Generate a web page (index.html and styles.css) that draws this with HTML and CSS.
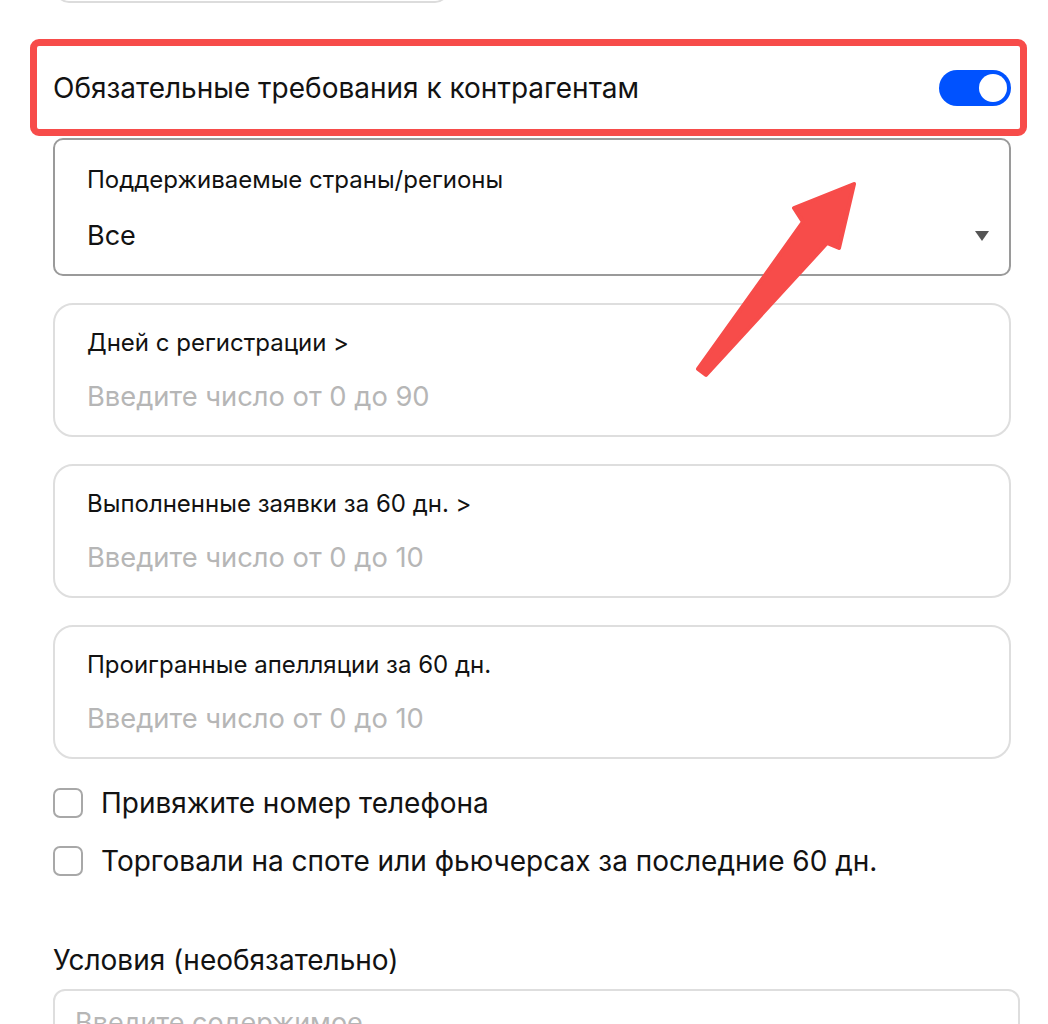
FILE: index.html
```html
<!DOCTYPE html>
<html lang="ru">
<head>
    <meta charset="UTF-8">
    <meta name="viewport" content="width=device-width, initial-scale=1.0">
    <title>Требования к контрагентам</title>
    <link rel="stylesheet" href="styles.css">
</head>
<body>
    <div class="page">
        <div class="prev-field"></div>

        <!-- Toggle row with red annotation -->
        <div class="toggle-row">
            <div class="highlight"></div>
            <span class="toggle-title">Обязательные требования к контрагентам</span>
            <div class="switch on"><div class="knob"></div></div>
        </div>

        <div class="field select-field">
            <div class="field-label">Поддерживаемые страны/регионы</div>
            <div class="field-value">
                <span>Все</span>
                <span class="caret"></span>
            </div>
        </div>

        <div class="field">
            <div class="field-label">Дней с регистрации &gt;</div>
            <div class="field-value placeholder">Введите число от 0 до 90</div>
        </div>

        <div class="field">
            <div class="field-label">Выполненные заявки за 60 дн. &gt;</div>
            <div class="field-value placeholder">Введите число от 0 до 10</div>
        </div>

        <div class="field">
            <div class="field-label">Проигранные апелляции за 60 дн.</div>
            <div class="field-value placeholder">Введите число от 0 до 10</div>
        </div>

        <div class="checks">
            <label class="check-row"><span class="checkbox"></span>Привяжите номер телефона</label>
            <label class="check-row"><span class="checkbox"></span>Торговали на споте или фьючерсах за последние 60 дн.</label>
        </div>

        <div class="section-title">Условия (необязательно)</div>
        <div class="textarea">
            <span class="placeholder">Введите содержимое</span>
        </div>

        <!-- annotation arrow -->
        <svg class="arrow" width="1048" height="1024" viewBox="0 0 1048 1024">
            <polygon points="698,369 706,375 827,243 839,248 854,184 794,208 803,222"
                     fill="#f74c4a" stroke="#f74c4a" stroke-width="4" stroke-linejoin="round"/>
        </svg>
    </div>
</body>
</html>
```

FILE: styles.css
```css
body {
    margin: 0;
    background: #ffffff;
    font-family: Inter, "Noto Sans", sans-serif;
    color: #121212;
    overflow: hidden;
    height: 1024px;
}
.page {
    position: relative;
    width: 958px;
    padding-left: 53px;
    display: flex;
    flex-direction: column;
}
.page > * {
    flex-shrink: 0;
}
.prev-field {
    width: 394px;
    height: 40px;
    margin-top: -37px;
    margin-left: 2px;
    border: 2px solid #dcdcdc;
    border-radius: 0 0 14px 14px;
    box-sizing: border-box;
}

/* toggle row */
.toggle-row {
    position: relative;
    height: 96px;
    margin-top: 37px;
    display: flex;
    align-items: center;
    justify-content: space-between;
}
.highlight {
    position: absolute;
    left: -23px;
    right: -16px;
    top: -1px;
    bottom: 0;
    border: 7px solid #f74c4a;
    border-radius: 9px;
}
.toggle-title {
    font-size: 28px;
}
.switch {
    width: 72px;
    height: 36px;
    border-radius: 18px;
    background: #0052ff;
    position: relative;
}
.switch .knob {
    position: absolute;
    top: 4px;
    right: 4px;
    width: 28px;
    height: 28px;
    border-radius: 50%;
    background: #fff;
}

/* fields */
.field {
    border: 2px solid #dedede;
    border-radius: 20px;
    padding: 23px 32px 0;
    margin-top: 27px;
    height: 134px;
    box-sizing: border-box;
}
.select-field {
    margin-top: 2px;
    height: 138px;
    border-color: #9a9a9a;
    border-radius: 10px;
    padding-top: 25px;
}
.field-label {
    font-size: 24px;
    line-height: 30px;
}
.field-value {
    font-size: 27px;
    line-height: 36px;
    margin-top: 21px;
    display: flex;
    justify-content: space-between;
    align-items: center;
}
.field-value.placeholder {
    font-size: 27.3px;
}
.select-field .field-value {
    margin-top: 23px;
}
.placeholder {
    color: #b6b6b6;
}
.caret {
    width: 0;
    height: 0;
    margin-right: -12px;
    border-left: 7px solid transparent;
    border-right: 7px solid transparent;
    border-top: 10px solid #555;
}

/* checkboxes */
.checks {
    margin-top: 29px;
    display: flex;
    flex-direction: column;
    gap: 28px;
}
.check-row {
    display: flex;
    align-items: center;
    gap: 18px;
    font-size: 28px;
    line-height: 30px;
}
.checkbox {
    width: 30px;
    height: 30px;
    border: 2px solid #a8a8a8;
    border-radius: 7px;
    box-sizing: border-box;
}

.section-title {
    margin-top: 66px;
    font-size: 28px;
    line-height: 36px;
}
.textarea {
    margin-top: 11px;
    width: 967px;
    height: 120px;
    border: 2px solid #dedede;
    border-radius: 12px;
    box-sizing: border-box;
    padding: 14px 20px;
    font-size: 27px;
    line-height: 36px;
}

.arrow {
    position: absolute;
    left: 0;
    top: 0;
    pointer-events: none;
}
```
